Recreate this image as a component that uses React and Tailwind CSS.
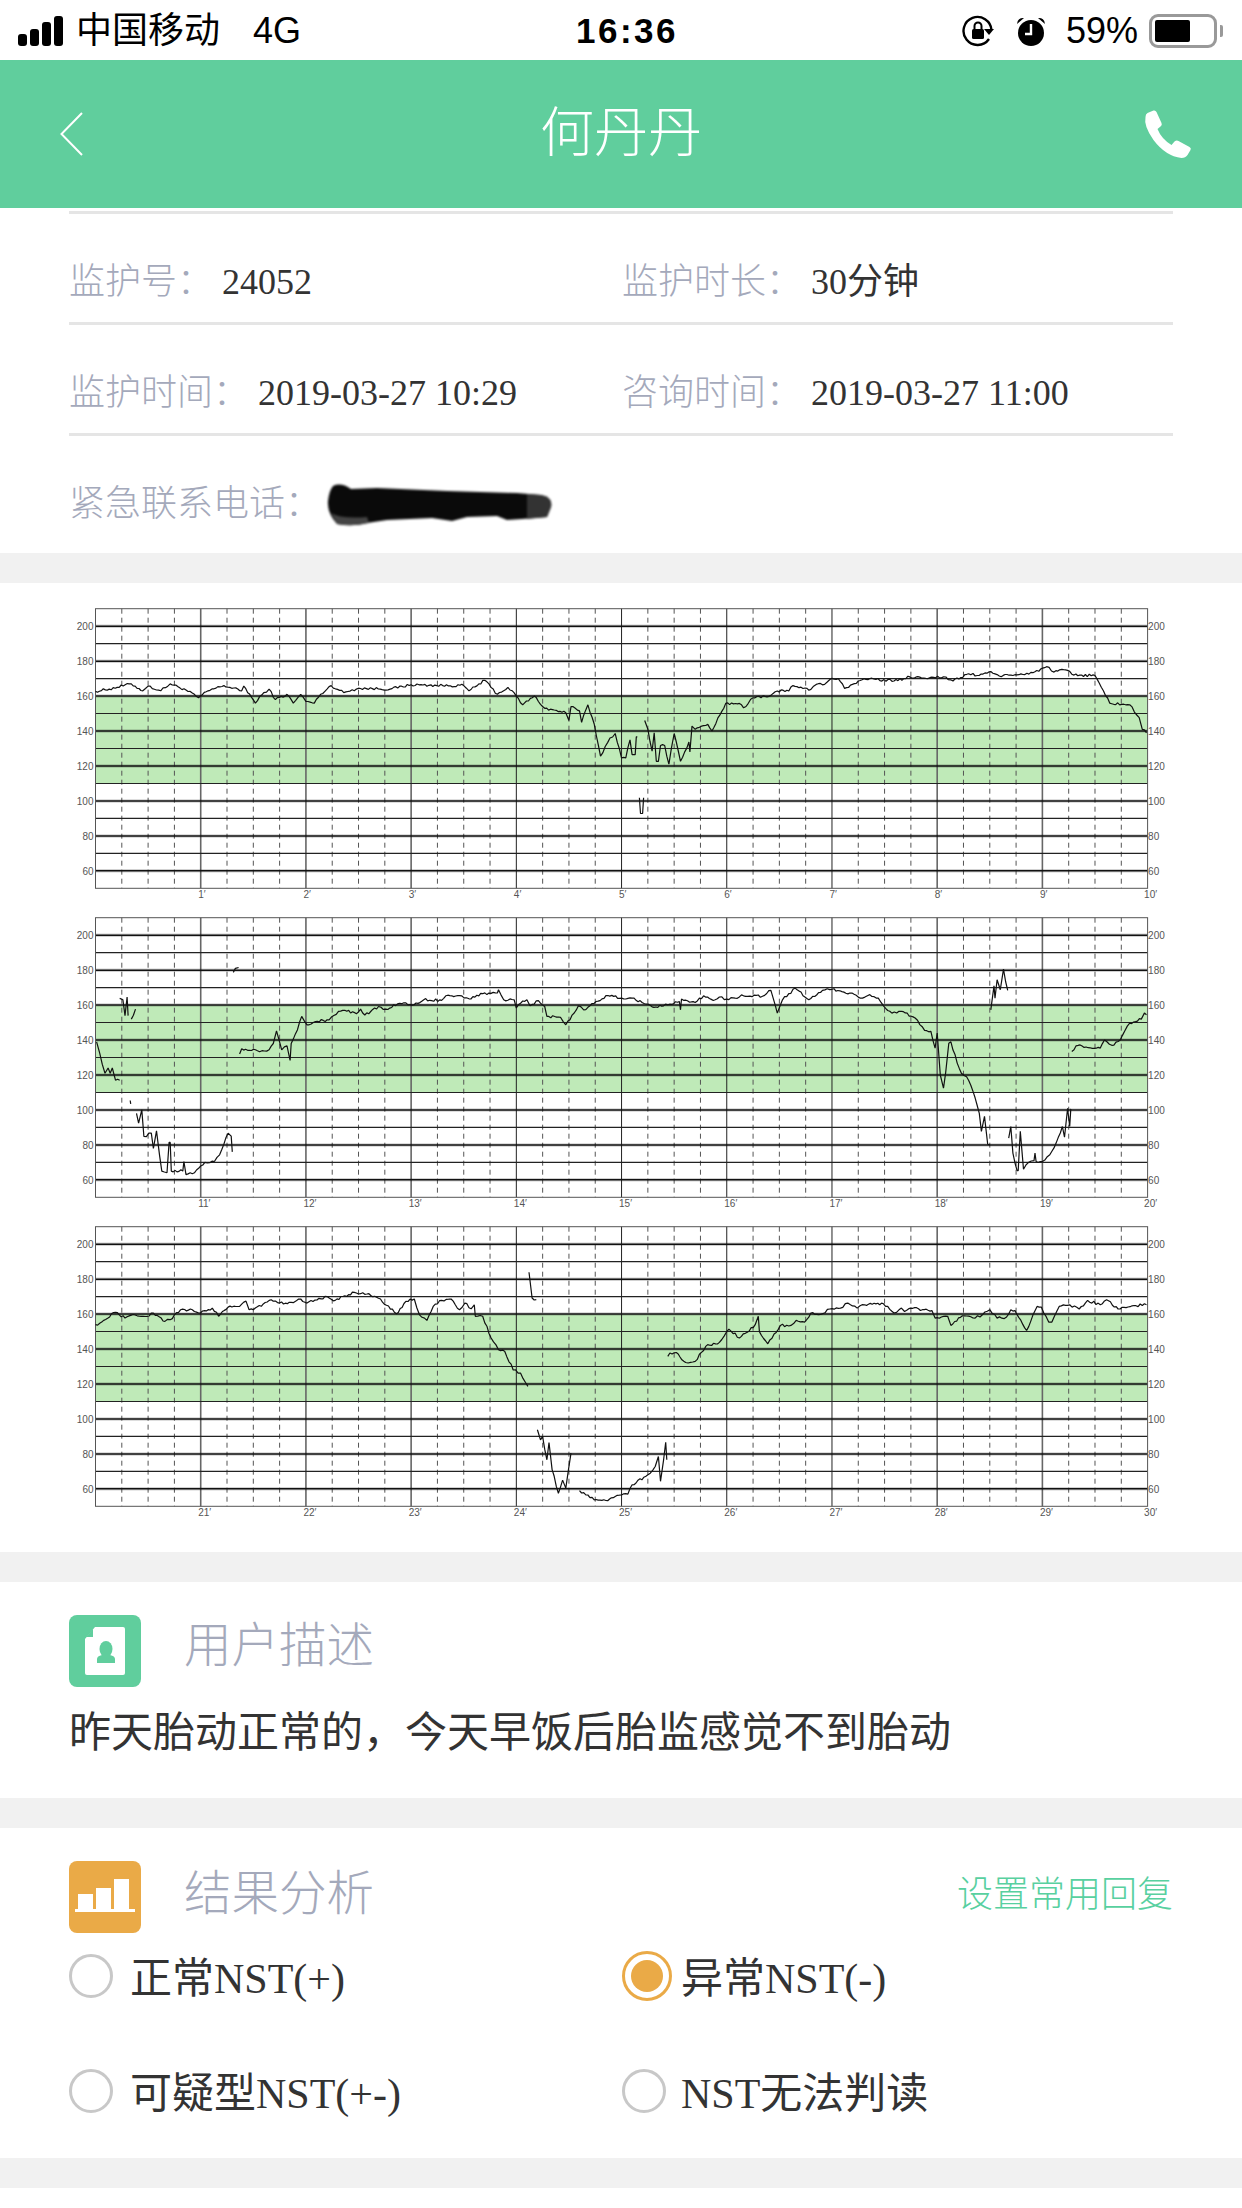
const WIDTH = 1242;
const LEFT = 95.5;
const RIGHT = 1147.6;
const TOP = 13.7;
const PX_PER_BPM = 1.7475;
const PX_PER_MIN = (RIGHT - LEFT) / 10;

// traces read off the strips as [minute inside the strip, bpm]
const STRIP_1 = [
  [[0,162.7],[.13,164],[.34,167],[.45,163],[.5,165.7],[.62,163],[.71,167],[.86,163.5],[.98,159],[1.07,163],[1.22,166],[1.39,163],[1.41,165.7],[1.52,156],[1.6,162],[1.65,164],[1.71,158],[1.82,161],[1.88,156],[1.95,161],[2,157],[2.08,156],[2.14,161],[2.24,166],[2.36,162],[2.5,164.5],[2.8,164],[3,166.5],[3.3,166],[3.5,166],[3.55,163],[3.7,169],[3.82,161],[3.92,165],[4,160],[4.06,155],[4.17,160],[4.27,153],[4.47,150.5],[4.5,146],[4.52,154],[4.6,151.5],[4.62,145],[4.68,155],[4.74,144],[4.8,125.6],[4.89,136],[4.94,138.6],[5,124.7],[5.04,124.7],[5.08,135],[5.1,126.5],[5.13,126.5],[5.14,136.7],[5.15,136.7]],
  [[5.17,101.8],[5.18,92.8],[5.2,92.8],[5.21,101.8]],
  [[5.22,146],[5.25,141],[5.29,128.5],[5.31,139],[5.33,122.7],[5.35,122.7],[5.37,131.7],[5.41,131.7],[5.45,121],[5.5,138.6],[5.56,122.7],[5.64,133.7],[5.65,128],[5.67,142.8],[5.7,141],[5.82,143.8],[5.86,140],[5.99,155.8],[6.12,155.8],[6.16,153.3],[6.25,159],[6.42,160.4],[6.48,162.9],[6.59,162.9],[6.63,166],[6.8,163.8],[6.85,166.7],[6.93,166.7],[6.98,169.5],[7.06,170],[7.12,164.4],[7.25,168.6],[7.36,170],[7.59,168.6],[7.74,171],[7.93,170.5],[8.06,171],[8.15,168.6],[8.3,172.8],[8.38,171.8],[8.51,174],[8.59,171.5],[8.72,171.8],[8.91,173.4],[9.04,176.8],[9.11,173.7],[9.22,175],[9.3,172],[9.5,171.8],[9.64,156],[9.83,155],[9.92,147.6],[9.95,141],[9.99,139]],
];

const STRIP_2 = [
  [[.01,139],[.04,132.5],[.09,121],[.12,124],[.14,121],[.16,124],[.19,117],[.23,117]],
  [[.23,163.8],[.26,163],[.28,154],[.3,164.6],[.31,154]],
  [[.34,152],[.38,157.7]],
  [[.33,105.4],[.335,103.5]],
  [[.39,98],[.41,92.4],[.44,100],[.46,84.8],[.53,86.7],[.55,78],[.58,88],[.61,73.4],[.63,65],[.68,64],[.7,81.4],[.71,81.4],[.72,65],[.83,65],[.84,70.5],[.86,63],[.94,64],[1.04,70],[1.13,70.5],[1.18,74.3],[1.26,86.7],[1.29,85],[1.3,76]],
  [[1.31,178.7],[1.33,181],[1.36,181.5]],
  [[1.37,132],[1.39,135],[1.52,134.4],[1.56,133.3],[1.65,134.4],[1.69,138],[1.72,145.3],[1.77,134.4],[1.82,136.7],[1.85,128.3],[1.86,138],[1.92,145.9],[1.96,153.5],[2.01,148.7],[2.09,150.6],[2.22,151.6],[2.31,156.4],[2.37,157],[2.48,155],[2.52,157.7],[2.56,154.3],[2.69,159.2],[2.76,157.7],[2.89,161],[3.01,160],[3.12,163],[3.29,162.7],[3.33,165.3],[3.48,165.3],[3.55,163.6],[3.68,166.5],[3.82,166.9],[3.83,168.8],[3.88,163],[3.98,163],[4,158.3],[4.04,161],[4.1,163],[4.13,159.6],[4.21,162.5],[4.27,159.2],[4.29,153.5],[4.42,153],[4.47,148.7],[4.59,159.6],[4.64,157.3],[4.74,161],[4.87,165.5],[5,164],[5.1,164],[5.29,159],[5.4,159.6],[5.55,162],[5.56,157.3],[5.57,163.4],[5.7,161.5],[5.78,165.3],[5.89,163],[5.93,164.6],[6,163.4],[6.16,165.3],[6.34,165],[6.42,168.4],[6.48,155.4],[6.53,163],[6.65,169.7],[6.78,163],[6.91,168.4],[7,169],[7.17,166.9],[7.29,164],[7.36,166],[7.44,164],[7.49,159.6],[7.57,155.4],[7.66,156.4],[7.79,152.6],[7.88,145.5],[7.94,145],[7.98,135.4],[8,144],[8.03,120],[8.06,112.5],[8.08,121],[8.11,138.2],[8.13,139],[8.19,126.8],[8.23,121],[8.28,119],[8.34,110.6],[8.4,98],[8.42,87.7],[8.45,96.3],[8.48,80.4],[8.5,80]],
  [[8.51,157.3],[8.54,171],[8.55,164],[8.57,174.5],[8.6,168.8],[8.63,180.6],[8.65,173.5],[8.67,168.4]],
  [[8.68,83.9],[8.7,90.5],[8.72,75.3],[8.76,65.3],[8.77,65.3],[8.79,87.7],[8.82,66],[8.87,70],[8.92,71],[8.93,75.3],[8.94,70.5],[9,70.5],[9.07,74.3],[9.13,81],[9.19,90.5],[9.21,84.4],[9.24,101],[9.26,90.5],[9.27,100.6]],
  [[9.28,133.5],[9.32,136.7],[9.55,135.4],[9.59,140],[9.66,137],[9.74,140],[9.83,149.7],[9.94,152],[9.97,155.4],[9.99,154.5]],
];

const STRIP_3 = [
  [[0,153.9],[.04,154.8],[.19,161],[.28,157.7],[.34,159.4],[.49,158.7],[.55,160.6],[.66,155.8],[.71,156.8],[.81,162.5],[.92,162.5],[.98,160.6],[1.11,163.4],[1.17,158.7],[1.26,164],[1.37,164.4],[1.43,167.4],[1.46,162.5],[1.5,162.5],[1.67,168.2],[1.75,166.3],[1.86,166.7],[1.95,168.6],[2.01,166.3],[2.2,170],[2.26,167.6],[2.46,172.4],[2.58,171.5],[2.69,169],[2.86,160.2],[2.95,167.3],[3.03,168.6],[3.08,159.6],[3.15,156.4],[3.21,164.4],[3.29,167.8],[3.38,168.6],[3.46,162.5],[3.51,166.3],[3.57,163],[3.6,165.3],[3.61,158.7],[3.68,158.7],[3.76,146.3],[3.83,139.6],[3.89,138.6],[3.97,128],[4.04,126.2],[4.11,118.6]],
  [[4.12,183.9],[4.15,169.2],[4.19,168.2]],
  [[4.2,93.8],[4.23,88],[4.25,90],[4.29,76.6],[4.31,86.5],[4.34,71],[4.4,57.5],[4.44,65],[4.47,60.4],[4.52,80.4]],
  [[4.6,59],[4.74,53.7],[4.85,53.3],[4.94,55.6],[5.06,57],[5.1,62.3],[5.25,68],[5.32,72.8],[5.35,78.5],[5.37,64.3],[5.4,76.6],[5.42,86.7],[5.43,76.6]],
  [[5.44,135.8],[5.46,137.7],[5.52,138],[5.61,132.3],[5.7,132.9],[5.8,141.5],[5.93,143.8],[6.02,151.4],[6.12,146.3],[6.27,153.9],[6.3,158.7],[6.31,150],[6.39,143],[6.51,153.5],[6.61,153.5],[6.66,156.4],[6.74,155.4],[6.8,160.6],[6.91,160.2],[6.98,162.9],[7.08,163.4],[7.15,166.3],[7.24,163.4],[7.31,165.3],[7.49,165.9],[7.59,160.6],[7.66,163.4],[7.69,161.5],[7.75,163.4],[7.95,162],[7.98,157.7],[8.1,158.7],[8.13,153.5],[8.24,159],[8.36,157.7],[8.43,159.6],[8.5,162.5],[8.57,157.7],[8.66,158.3],[8.7,162.5],[8.74,162],[8.85,150.6],[8.95,164.4],[8.99,164],[9.06,155.4],[9.09,155.4],[9.16,164.4],[9.26,165.3],[9.35,162.9],[9.43,167.8],[9.55,165.3],[9.61,168.2],[9.72,162.9],[9.89,164.8],[9.99,165.3]],
];

const yOf = (bpm) => TOP + (210 - bpm) * PX_PER_BPM;
const xOf = (min) => LEFT + min * PX_PER_MIN;

// small repeatable wobble so the traces look like a recording, not straight segments
function tracePoints(seg, seed) {
  let s = seed;
  const rnd = () => {
    s = (s * 16807) % 2147483647;
    return s / 2147483647 - 0.5;
  };
  const out = [];
  seg.forEach(([m, b], i) => {
    out.push(`${xOf(m).toFixed(1)},${yOf(b).toFixed(1)}`);
    const next = seg[i + 1];
    if (!next) return;
    const steps = Math.floor((next[0] - m) / 0.018);
    for (let k = 1; k < steps; k++) {
      const t = k / steps;
      const bpm = b + (next[1] - b) * t + rnd() * 1.5;
      out.push(`${xOf(m + (next[0] - m) * t).toFixed(1)},${yOf(bpm).toFixed(1)}`);
    }
  });
  return out.join(' ');
}

function Strip({ traces, start, seed }) {
  const bottom = yOf(50);
  const gridH = [200, 190, 180, 170, 160, 150, 140, 130, 120, 110, 100, 90, 80, 70, 60];
  const minutes = [1, 2, 3, 4, 5, 6, 7, 8, 9];
  const quarters = [];
  for (let i = 0; i < 10; i++) [0.25, 0.5, 0.75].forEach((q) => quarters.push(i + q));

  return (
    <svg width={WIDTH} height="309" className="block">
      <rect x={LEFT} y={yOf(160)} width={RIGHT - LEFT} height={50 * PX_PER_BPM} fill="#bfeab8" />
      {quarters.map((q) => (
        <line key={q} x1={xOf(q)} x2={xOf(q)} y1={TOP} y2={bottom} stroke="#555" strokeWidth="1" strokeDasharray="5 4" />
      ))}
      {minutes.map((m) => (
        <line key={m} x1={xOf(m)} x2={xOf(m)} y1={TOP} y2={bottom} stroke={m >= 4 && m <= 7 ? '#222' : '#666'} strokeWidth={m >= 4 && m <= 7 ? 1 : 1.6} />
      ))}
      {gridH.map((v) =>
        v % 20 === 0 ? (
          <g key={v}>
            <line x1={LEFT} x2={RIGHT} y1={yOf(v)} y2={yOf(v)} stroke="#000" strokeOpacity="0.18" strokeWidth="3.5" />
            <line x1={LEFT} x2={RIGHT} y1={yOf(v)} y2={yOf(v)} stroke="#111" strokeWidth="1.5" />
          </g>
        ) : (
          <line key={v} x1={LEFT} x2={RIGHT} y1={yOf(v)} y2={yOf(v)} stroke="#222" strokeWidth="1.1" />
        )
      )}
      <rect x={LEFT} y={TOP} width={RIGHT - LEFT} height={bottom - TOP} fill="none" stroke="#555" strokeWidth="1" />
      {traces.map((seg, i) => (
        <polyline key={i} points={tracePoints(seg, seed + i * 97)} fill="none" stroke="#111" strokeWidth="1.2" strokeLinejoin="bevel" />
      ))}
      {[200, 180, 160, 140, 120, 100, 80, 60].map((v) => (
        <g key={v} fontSize="10" fill="#555" fontFamily="Liberation Sans, sans-serif">
          <text x={LEFT - 2} y={yOf(v) + 4} textAnchor="end">{v}</text>
          <text x={RIGHT + 0.5} y={yOf(v) + 4}>{v}</text>
        </g>
      ))}
      {[...minutes, 10].map((m) => (
        <text key={m} x={xOf(m) - (m === 10 ? 3.5 : 2.5)} y={bottom + 9.5} fontSize="10" fill="#555" fontFamily="Liberation Sans, sans-serif">
          {start + m}′
        </text>
      ))}
    </svg>
  );
}

function StatusBar() {
  return (
    <div className="h-[60px] bg-white flex items-center justify-between relative pl-[18px] pr-[19px] pt-[2px] text-[36px] text-black [font-family:Liberation_Sans,Noto_Sans_CJK_SC,sans-serif]">
      <div className="flex items-center">
        <div className="flex items-end gap-[3px] h-[30px]">
          <div className="w-[9px] h-[12px] bg-black rounded-[3px]"></div>
          <div className="w-[9px] h-[17px] bg-black rounded-[3px]"></div>
          <div className="w-[9px] h-[24px] bg-black rounded-[3px]"></div>
          <div className="w-[9px] h-[30px] bg-black rounded-[3px]"></div>
        </div>
        <span className="ml-[13px] leading-none">中国移动</span>
        <span className="ml-[33px] leading-none">4G</span>
      </div>
      <span className="absolute left-[576px] top-[12px] leading-[38px] font-bold tracking-[2.5px] text-[35px]">16:36</span>
      <div className="flex items-center">
        <svg width="32" height="32" viewBox="0 0 32 32" className="mr-[22px]">
          <path d="M27 24A14 14 0 1 1 29.5 15" fill="none" stroke="#000" strokeWidth="2.4" />
          <path d="M24 14h10l-5 6z" fill="#000" transform="translate(-2 0)" />
          <rect x="10" y="14" width="12" height="10" rx="1.5" fill="#000" />
          <path d="M12.5 14v-3a3.5 3.5 0 0 1 7 0v3" fill="none" stroke="#000" strokeWidth="2" />
        </svg>
        <svg width="30" height="31" viewBox="0 0 30 31" className="mr-[20px]">
          <circle cx="15" cy="17" r="13" fill="#000" />
          <path d="M15 8v10h-6" fill="none" stroke="#fff" strokeWidth="2.4" />
          <path d="M1 8a6 6 0 0 1 7-6zM29 8a6 6 0 0 0-7-6z" fill="#000" />
        </svg>
        <span className="leading-none">59%</span>
        <div className="ml-[11px] w-[68px] h-[34px] border-[3px] border-[#999] rounded-[9px] p-[3px] flex">
          <div className="w-[35px] h-full bg-black rounded-[2px]"></div>
        </div>
        <div className="ml-[3px] w-[3px] h-[12px] bg-[#999] rounded-r-[2px]"></div>
      </div>
    </div>
  );
}

function Header() {
  return (
    <div className="h-[148px] bg-[#60ce9d] flex items-center justify-between relative pl-[60px] pr-[50px]">
      <svg width="23" height="44" viewBox="0 0 23 44">
        <path d="M22 1L1.5 22L22 43" fill="none" stroke="#fff" strokeWidth="2" />
      </svg>
      <span className="absolute left-0 right-0 text-center text-[54px] leading-[60px] text-white font-light">何丹丹</span>
      <svg width="49" height="48" viewBox="0 0 48 48">
        <path d="M4 3L10 .5Q12 0 13 2L18 13Q19 15 17 16.5L14 19Q18 29 28 35L31 31.5Q33 30 35 31L46 37Q48 38 47 40L44 45Q42 48 38 48Q22 46 10 30Q0 16 2 7Q2 4 4 3Z" fill="#fff" />
      </svg>
    </div>
  );
}

function Info({ label, children, className }) {
  return (
    <div className={`flex items-center h-[50px] ${className || ''}`}>
      <span className="text-[#a4a9bb] mr-[9px] font-light">{label}{'\uFF1A'}</span>
      <span className="text-[#333]">{children}</span>
    </div>
  );
}

function Radio({ checked }) {
  if (checked) {
    return (
      <div className="w-[50px] h-[50px] rounded-full border-[3px] border-[#eaaa47] flex items-center justify-center mr-[9px] shrink-0">
        <div className="w-[32px] h-[32px] rounded-full bg-[#eaaa47]"></div>
      </div>
    );
  }
  return <div className="w-[44px] h-[44px] rounded-full border-[3px] border-[#c8c8c8] shrink-0"></div>;
}

export default function App() {
  return (
    <div className="w-[1242px] h-[2208px] bg-white overflow-hidden [font-family:Liberation_Serif,Noto_Sans_CJK_SC,serif]">
      <StatusBar />
      <Header />

      {/* Monitoring info */}
      <div className="px-[69px] pt-[3px] text-[36px] leading-[50px]">
        <div className="border-t-[3px] border-[#e5e5e5]"></div>
        <div className="flex pt-[43px] pb-[15px] border-b-[3px] border-[#e5e5e5]">
          <Info label="监护号" className="w-[553px]">24052</Info>
          <Info label="监护时长">30分钟</Info>
        </div>
        <div className="flex pt-[43px] pb-[15px] border-b-[3px] border-[#e5e5e5]">
          <Info label="监护时间" className="w-[553px]">2019-03-27 10:29</Info>
          <Info label="咨询时间">2019-03-27 11:00</Info>
        </div>
        <div className="flex items-center pt-[43px] pb-[24px]">
          <span className="text-[#a4a9bb] font-light">紧急联系电话{'\uFF1A'}</span>
          <svg width="226" height="44" viewBox="0 0 226 44" className="ml-[6px] mt-[2px] blur-[0.8px]">
            <path d="M6 3Q14 -1 24 6L50 5L120 8L190 10L214 12Q226 14 224 24L220 34L195 36L180 37L170 33L140 34L125 38L105 35L60 37L40 40Q25 44 10 41Q0 30 1 18Q2 8 6 3Z" fill="#0a0a0a" />
            <path d="M200 11L214 12Q226 14 224 24L220 34L200 36Z" fill="#333" />
            <path d="M4 30Q14 36 40 34L42 40Q25 44 10 41Z" fill="#444" />
          </svg>
        </div>
      </div>

      <div className="h-[30px] bg-[#f1f1f1]"></div>

      {/* Trace strips */}
      <div className="pt-[12px] pb-[30px]">
        <Strip traces={STRIP_1} start={0} seed={1234} />
        <Strip traces={STRIP_2} start={10} seed={5678} />
        <Strip traces={STRIP_3} start={20} seed={9012} />
      </div>

      <div className="h-[30px] bg-[#f1f1f1]"></div>

      {/* User description */}
      <div className="px-[69px] pt-[33px] pb-[40px]">
        <div className="flex items-start">
          <div className="w-[72px] h-[72px] rounded-[8px] bg-[#60ce9d] flex items-center justify-center">
            <svg width="40" height="48" viewBox="0 0 40 48">
              <path d="M10 0H38Q40 0 40 2V46Q40 48 38 48H2Q0 48 0 46V12Z" fill="#fff" />
              <path d="M8 2L8 10L1 10Z" fill="#60ce9d" />
              <ellipse cx="21" cy="22" rx="6.5" ry="8" fill="#60ce9d" />
              <path d="M12 36V32Q12 29 17 28H25Q30 29 30 32V36Z" fill="#60ce9d" />
            </svg>
          </div>
          <span className="ml-[43px] mt-[1px] text-[47.5px] leading-[60px] text-[#a4a9bb] font-light">用户描述</span>
        </div>
        <div className="mt-[21px] text-[42px] leading-[50px] text-[#333]">{'昨天胎动正常的\uFF0C今天早饭后胎监感觉不到胎动'}</div>
      </div>

      <div className="h-[30px] bg-[#f1f1f1]"></div>

      {/* Result analysis */}
      <div className="px-[69px] pt-[33px] pb-[42px]">
        <div className="flex items-start">
          <div className="w-[72px] h-[72px] rounded-[8px] bg-[#eaaa47] flex items-center justify-center">
            <svg width="72" height="72" viewBox="0 0 72 72">
              <rect x="6" y="48" width="60" height="3" fill="#fff" />
              <rect x="9" y="33" width="15" height="15" fill="#fff" />
              <rect x="27" y="27" width="15" height="21" fill="#fff" />
              <rect x="45" y="18" width="15" height="30" fill="#fff" />
            </svg>
          </div>
          <span className="ml-[43px] mt-[3px] text-[47.5px] leading-[60px] text-[#a4a9bb] font-light">结果分析</span>
          <span className="ml-auto mt-[9px] text-[36px] leading-[50px] text-[#58d0a0] font-light">设置常用回复</span>
        </div>
        <div className="mt-[18px] grid grid-cols-[553px_1fr] gap-y-[65px] text-[42px] leading-[50px] text-[#333]">
          <div className="flex items-center h-[50px]">
            <Radio />
            <span className="ml-[17px] mt-[5px]">正常NST(+)</span>
          </div>
          <div className="flex items-center h-[50px]">
            <Radio checked />
            <span className="mt-[5px]">异常NST(-)</span>
          </div>
          <div className="flex items-center h-[50px]">
            <Radio />
            <span className="ml-[17px] mt-[5px]">可疑型NST(+-)</span>
          </div>
          <div className="flex items-center h-[50px]">
            <Radio />
            <span className="ml-[15px] mt-[5px]">NST无法判读</span>
          </div>
        </div>
      </div>

      <div className="h-[30px] bg-[#f1f1f1]"></div>
    </div>
  );
}
